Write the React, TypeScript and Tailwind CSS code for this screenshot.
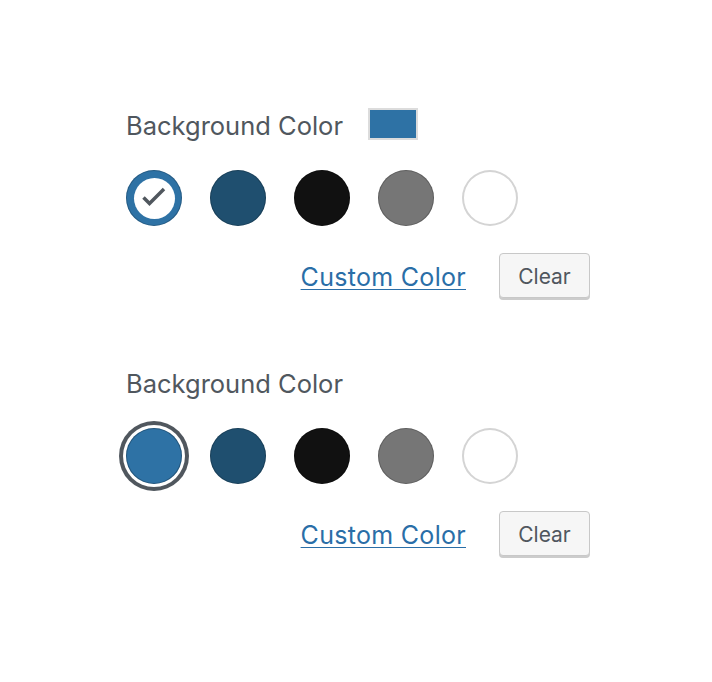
import { useState } from "react";

const COLORS = ["#2e72a5", "#1f4f6f", "#111111", "#767676", "#ffffff"];

function CheckIcon() {
  return (
    <svg width="28" height="28" viewBox="0 0 28 28" fill="none">
      <path
        d="M3.5 13.5L9.5 19.5L24 5"
        stroke="#50575e"
        strokeWidth="3.5"
        strokeLinecap="butt"
      />
    </svg>
  );
}

function Swatch({
  color,
  mode,
}: {
  color: string;
  mode: "none" | "check" | "ring";
}) {
  const isWhite = color === "#ffffff";
  const shadow = isWhite
    ? "inset 0 0 0 2px #d4d4d4"
    : mode === "ring"
      ? "inset 0 0 0 1px rgba(0,0,0,0.25), 0 0 0 3px #fff, 0 0 0 7px #50575e"
      : "inset 0 0 0 1px rgba(0,0,0,0.2)";

  return (
    <button
      type="button"
      className="flex h-14 w-14 items-center justify-center rounded-full"
      style={{ backgroundColor: color, boxShadow: shadow }}
    >
      {mode === "check" && (
        <span className="flex h-[41px] w-[41px] items-center justify-center rounded-full bg-white">
          <CheckIcon />
        </span>
      )}
    </button>
  );
}

function ColorPicker({
  showPreview,
  selectedMode,
}: {
  showPreview: boolean;
  selectedMode: "check" | "ring";
}) {
  const [selected] = useState(0);

  return (
    <div className="flex w-[464px] flex-col">
      <div className="flex h-8 items-center gap-[25px]">
        <span className="pt-[4px] text-[25.5px] text-[#50575e]">Background Color</span>
        {showPreview && (
          <span className="h-8 w-[50px] border-2 border-[#dcdcdc] bg-[#2e72a5]" />
        )}
      </div>

      <div className="mt-[30px] flex gap-7">
        {COLORS.map((c, i) => (
          <Swatch key={c} color={c} mode={i === selected ? selectedMode : "none"} />
        ))}
      </div>

      <div className="mt-[27px] flex items-center justify-end gap-[33px]">
        <a
          href="#"
          className="pt-[4px] text-[25px] tracking-[0.3px] text-[#2a6ea7] underline decoration-1 underline-offset-[3px]"
        >
          Custom Color
        </a>
        <button
          type="button"
          className="h-[45px] w-[91px] rounded-[4px] border border-[#c8c8c8] bg-[#f6f6f6] pt-[3px] text-[21px] text-[#50575e] shadow-[0_2px_0_#cccccc]"
        >
          Clear
        </button>
      </div>
    </div>
  );
}

export default function App() {
  return (
    <div
      className="min-h-[682px] bg-white pl-[126px] pt-[108px]"
      style={{ fontFamily: "Inter, 'Liberation Sans', sans-serif" }}
    >
      <div className="flex flex-col gap-[68px]">
        <ColorPicker showPreview selectedMode="check" />
        <ColorPicker showPreview={false} selectedMode="ring" />
      </div>
    </div>
  );
}
